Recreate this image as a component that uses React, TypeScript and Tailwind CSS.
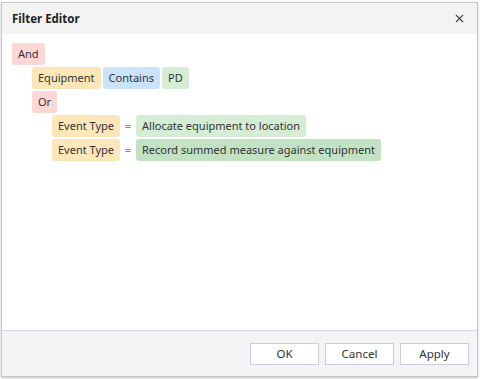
import { X } from "lucide-react";

type Tone = "group" | "field" | "op" | "value" | "valueActive";

const toneClass: Record<Tone, string> = {
  group: "bg-[#fdd6d6]",
  field: "bg-[#fde7b9]",
  op: "bg-[#c9e3fb]",
  value: "bg-[#d5edd5]",
  valueActive: "bg-[#c2e3c3]",
};

function Chip({ tone, children }: { tone: Tone; children: React.ReactNode }) {
  return (
    <span className={`inline-flex h-[22px] items-center rounded-[3px] px-[6px] ${toneClass[tone]}`}>
      {children}
    </span>
  );
}

function Equals() {
  return <span className="inline-flex h-[22px] w-[16px] items-center justify-center text-[#888]">=</span>;
}

function FooterButton({ label }: { label: string }) {
  return (
    <button className="h-[22px] w-[69px] border border-[#cbcbe0] bg-white text-[11.5px] text-[#333]">
      {label}
    </button>
  );
}

export default function App() {
  return (
    <div
      className="h-[379px] w-[480px] bg-white pl-[1px] pr-[2px] pt-[2px] pb-[2px] text-[11px] text-[#333]"
      style={{ fontFamily: '"Noto Sans", "Open Sans", sans-serif' }}
    >
      <div className="flex h-full flex-col border border-[#c6c6c6] shadow-[0_1px_2px_rgba(0,0,0,0.25)]">
        {/* header */}
        <div className="flex h-[31px] items-center justify-between bg-[#f3f3f3] pl-[10px] pr-[11px]">
          <span className="text-[11.5px] font-bold text-[#222]">Filter Editor</span>
          <X size={13} strokeWidth={2} className="text-[#444]" />
        </div>

        {/* filter tree */}
        <div className="flex flex-1 flex-col gap-[2px] bg-white pl-[10px] pt-[9px]">
          <div className="flex">
            <Chip tone="group">And</Chip>
          </div>
          <div className="flex gap-[2px] pl-[20px]">
            <Chip tone="field">Equipment</Chip>
            <Chip tone="op">Contains</Chip>
            <Chip tone="value">PD</Chip>
          </div>
          <div className="flex pl-[20px]">
            <Chip tone="group">Or</Chip>
          </div>
          <div className="flex pl-[40px]">
            <Chip tone="field">Event Type</Chip>
            <Equals />
            <Chip tone="value">Allocate equipment to location</Chip>
          </div>
          <div className="flex pl-[40px]">
            <Chip tone="field">Event Type</Chip>
            <Equals />
            <Chip tone="valueActive">Record summed measure against equipment</Chip>
          </div>
        </div>

        {/* footer */}
        <div className="flex h-[46px] items-center justify-end gap-[6px] border-t border-[#d4d4e0] bg-[#f4f4f4] pr-[8px]">
          <FooterButton label="OK" />
          <FooterButton label="Cancel" />
          <FooterButton label="Apply" />
        </div>
      </div>
    </div>
  );
}
